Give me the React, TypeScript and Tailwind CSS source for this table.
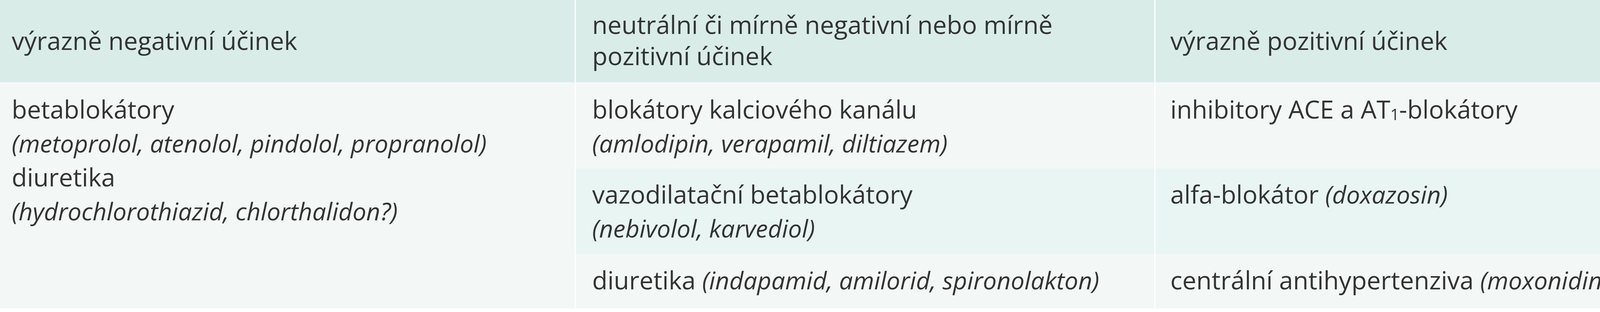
import React from "react";

const font = { fontFamily: '"Open Sans", "Noto Sans", sans-serif' };

function I({ children }: { children: React.ReactNode }) {
  return <span className="italic font-normal text-[62.5px]">{children}</span>;
}

export default function App() {
  return (
    <div className="w-[4231px] h-[800px] bg-white" style={font}>
      <div className="w-[4222px] grid grid-cols-[1471px_1481px_1264px] grid-rows-[211px_221px_219px_140px] gap-x-[3px] bg-white text-[64px] font-normal text-[#333333]">
        <div className="bg-[#d9ece8] flex items-center pl-[30px] pb-[4px] leading-[80px]">
          výrazně negativní účinek
        </div>
        <div className="bg-[#d9ece8] flex items-center pl-[42px] pb-[6px] leading-[80px]">
          <div>
            neutrální či mírně negativní nebo mírně
            <br />
            pozitivní účinek
          </div>
        </div>
        <div className="bg-[#d9ece8] flex items-center pl-[38px] pb-[4px] leading-[80px]">
          výrazně pozitivní účinek
        </div>

        <div className="row-span-3 bg-[#f3f8f7] pl-[30px] pt-[25px] leading-[87px]">
          <div>betablokátory</div>
          <div>
            <I>(metoprolol, atenolol, pindolol, propranolol)</I>
          </div>
          <div>diuretika</div>
          <div>
            <I>(hydrochlorothiazid, chlorthalidon?)</I>
          </div>
        </div>

        <div className="bg-[#f3f8f7] pl-[42px] pt-[25px] leading-[87px]">
          <div>blokátory kalciového kanálu</div>
          <div>
            <I>(amlodipin, verapamil, diltiazem)</I>
          </div>
        </div>
        <div className="bg-[#f3f8f7] pl-[38px] pt-[25px] leading-[87px]">
          <div>
            inhibitory ACE a AT
            <sub className="text-[0.62em] leading-none relative top-[4px]">1</sub>
            -blokátory
          </div>
        </div>

        <div className="bg-[#e9f5f2] pl-[42px] pt-[22px] leading-[87px]">
          <div>vazodilatační betablokátory</div>
          <div>
            <I>(nebivolol, karvediol)</I>
          </div>
        </div>
        <div className="bg-[#e9f5f2] pl-[38px] pt-[22px] leading-[87px]">
          <div>
            alfa-blokátor <I>(doxazosin)</I>
          </div>
        </div>

        <div className="bg-[#f3f8f7] pl-[42px] pt-[23px] leading-[87px]">
          <div>
            diuretika <I>(indapamid, amilorid, spironolakton)</I>
          </div>
        </div>
        <div className="bg-[#f3f8f7] pl-[38px] pt-[23px] leading-[87px]">
          <div>
            centrální antihypertenziva <I>(moxonidin)</I>
          </div>
        </div>
      </div>
    </div>
  );
}
